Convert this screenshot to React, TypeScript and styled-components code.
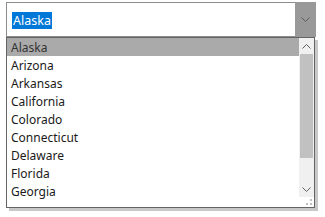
import React, { useState } from 'react'
import styled, { createGlobalStyle } from 'styled-components'

const GlobalStyle = createGlobalStyle`
  html, body {
    margin: 0;
    padding: 0;
    background: #ffffff;
    font-family: 'Noto Sans', 'Open Sans', sans-serif;
  }
`

const states = [
  'Alaska', 'Arizona', 'Arkansas', 'California', 'Colorado',
  'Connecticut', 'Delaware', 'Florida', 'Georgia',
]

const Page = styled.div`
  padding: 2px 0 0 6px;
  width: 325px;
  height: 217px;
  box-sizing: border-box;
`

const Combo = styled.div`
  display: flex;
  width: 310px;
  height: 35px;
  box-sizing: border-box;
  border: 1px solid #8c8c8c;
  border-right: none;
  background: #fff;
`

const Field = styled.div`
  flex: 1;
  display: flex;
  align-items: center;
  padding: 2px 0 0 5px;
`

const Selected = styled.span`
  background: #0078d7;
  color: #fff;
  font-size: 12.5px;
  line-height: 17px;
  padding: 0 1px;
`

const DropButton = styled.div`
  width: 21px;
  margin: -1px 0;
  background: #999999;
  display: flex;
  align-items: center;
  justify-content: center;
`

const List = styled.div`
  display: flex;
  width: 309px;
  height: 171px;
  box-sizing: border-box;
  border: 1px solid #646464;
  background: #fff;
  box-shadow: 3px 3px 0 #c8c8c8;
`

const Items = styled.div`
  flex: 1;
  overflow: hidden;
`

const Item = styled.div<{ $active?: boolean }>`
  height: 18px;
  line-height: 20px;
  overflow: hidden;
  padding-left: 4px;
  font-size: 12px;
  color: ${p => (p.$active ? '#333' : '#1a1a1a')};
  background: ${p => (p.$active ? '#aaaaaa' : 'transparent')};
`

const Side = styled.div`
  width: 15px;
  display: flex;
  flex-direction: column;
`

const Scroll = styled.div`
  flex: 1;
  display: flex;
  flex-direction: column;
  background: #f0f0f0;
`

const ArrowBox = styled.div`
  height: 16px;
  display: flex;
  align-items: center;
  justify-content: center;
`

const Track = styled.div`
  flex: 1;
  display: flex;
  flex-direction: column;
`

const Thumb = styled.div`
  height: 104px;
  margin: 0 1px 0 1px;
  background: #c1c1c1;
`

const Grip = styled.div`
  height: 10px;
  background: #fff;
  position: relative;
`

const Dot = styled.span<{ $x: number; $y: number }>`
  position: absolute;
  width: 2px;
  height: 2px;
  background: #c0c0c0;
  left: ${p => p.$x}px;
  top: ${p => p.$y}px;
`

const Chevron = ({ up, color }: { up?: boolean; color: string }) => (
  <svg width="9" height="5" viewBox="0 0 9 5">
    <path
      d={up ? 'M0.5 4.5 L4.5 0.5 L8.5 4.5' : 'M0.5 0.5 L4.5 4.5 L8.5 0.5'}
      fill="none"
      stroke={color}
      strokeWidth="1"
    />
  </svg>
)

export default function App() {
  const [value] = useState('Alaska')

  return (
    <Page>
      <GlobalStyle />
      <Combo>
        <Field>
          <Selected>{value}</Selected>
        </Field>
        <DropButton>
          <Chevron color="#5c5c5c" />
        </DropButton>
      </Combo>
      <List>
        <Items>
          {states.map(s => (
            <Item key={s} $active={s === value}>{s}</Item>
          ))}
        </Items>
        <Side>
          <Scroll>
            <ArrowBox>
              <Chevron up color="#606060" />
            </ArrowBox>
            <Track>
              <Thumb />
            </Track>
            <ArrowBox>
              <Chevron color="#606060" />
            </ArrowBox>
          </Scroll>
          <Grip>
            <Dot $x={11} $y={2} />
            <Dot $x={7} $y={6} />
            <Dot $x={11} $y={6} />
          </Grip>
        </Side>
      </List>
    </Page>
  )
}
